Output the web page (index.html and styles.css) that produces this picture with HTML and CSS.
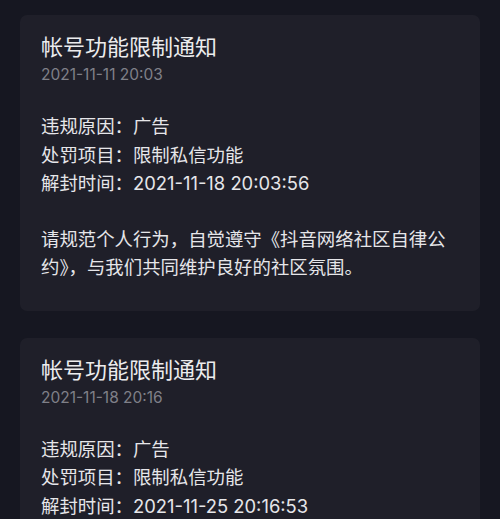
FILE: index.html
```html
<!DOCTYPE html>
<html lang="zh-CN">
<head>
<meta charset="utf-8">
<link rel="stylesheet" href="styles.css">
</head>
<body>
<div class="list">
  <div class="card">
    <div class="title">帐号功能限制通知</div>
    <div class="date">2021-11-11 20:03</div>
    <div class="info">
      <div class="line">违规原因：广告</div>
      <div class="line">处罚项目：限制私信功能</div>
      <div class="line">解封时间：2021-11-18 20:03:56</div>
    </div>
    <div class="para">请规范个人行为，自觉遵守《抖音网络社区自律公约》，与我们共同维护良好的社区氛围。</div>
  </div>
  <div class="card">
    <div class="title">帐号功能限制通知</div>
    <div class="date">2021-11-18 20:16</div>
    <div class="info">
      <div class="line">违规原因：广告</div>
      <div class="line">处罚项目：限制私信功能</div>
      <div class="line">解封时间：2021-11-25 20:16:53</div>
    </div>
    <div class="para">请规范个人行为，自觉遵守《抖音网络社区自律公约》，与我们共同维护良好的社区氛围。</div>
  </div>
</div>
</body>
</html>
```

FILE: styles.css
```css
html, body {
  margin: 0;
  padding: 0;
  background: #161721;
  height: 100%;
  overflow: hidden;
}
body {
  font-family: "Inter", "Noto Sans CJK SC", sans-serif;
  color: #e6e6e9;
}
.list {
  display: flex;
  flex-direction: column;
  gap: 27px;
  padding: 15px 20px 0;
}
.card {
  background: #1f1f29;
  border-radius: 7px;
  padding: 18px 21px 30px;
}
.title {
  font-size: 22px;
  line-height: 28px;
  color: #ececee;
}
.date {
  font-size: 15.5px;
  line-height: 28px;
  color: #7f8088;
}
.info {
  margin-top: 23px;
  font-size: 18.4px;
  line-height: 28.5px;
}
.para {
  margin-top: 27px;
  font-size: 18.4px;
  line-height: 28px;
}
```
